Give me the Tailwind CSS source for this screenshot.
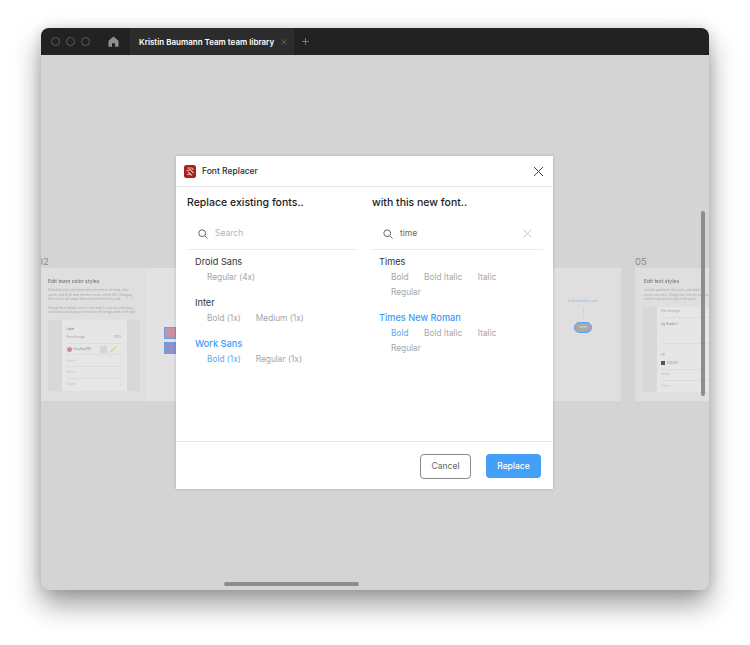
<!DOCTYPE html>
<html lang="en">
  <head>
    <meta charset="UTF-8" />
    <meta name="viewport" content="width=device-width, initial-scale=1.0" />
    <script src="https://cdn.jsdelivr.net/npm/@tailwindcss/browser@4"></script>
    <title>Font Replacer</title>
  </head>

  <body class="bg-white font-['Inter',sans-serif] w-[750px] h-[645px] overflow-hidden">
    <div class="pt-[28px] pl-[41px]">
      <!-- window -->
      <div class="relative w-[668px] h-[562px] rounded-[8px] overflow-hidden bg-[#d4d4d4] shadow-[0_14px_28px_rgba(0,0,0,0.4),0_0_12px_rgba(0,0,0,0.12)]">
        <!-- title bar -->
        <div class="flex items-center h-[27px] bg-[#222222]">
          <div class="flex items-center gap-[6px] pl-[10px] w-[89px] shrink-0">
            <span class="w-[9px] h-[9px] shrink-0 rounded-full border border-[#5c5c5c]"></span>
            <span class="w-[9px] h-[9px] shrink-0 rounded-full border border-[#5c5c5c]"></span>
            <span class="w-[9px] h-[9px] shrink-0 rounded-full border border-[#5c5c5c]"></span>
            <svg class="ml-[12px] shrink-0" width="11" height="11" viewBox="0 0 11 11"><path d="M5.5 0.5 L10.5 4.8 V10.8 H7 V7.2 H4 V10.8 H0.5 V4.8 Z" fill="#8f8f8f"/></svg>
          </div>
          <div class="flex items-center h-full w-[164px] bg-[#2c2c2c] pl-[9px] text-[8px] font-semibold text-white whitespace-nowrap">
            Kristin Baumann Team team library
            <svg class="ml-[7px] shrink-0" width="6" height="6" viewBox="0 0 6 6"><path d="M0.5 0.5 L5.5 5.5 M5.5 0.5 L0.5 5.5" stroke="#5e5e5e" stroke-width="1"/></svg>
          </div>
          <svg class="ml-[8px]" width="7" height="7" viewBox="0 0 7 7"><path d="M3.5 0 V7 M0 3.5 H7" stroke="#777777" stroke-width="1"/></svg>
        </div>

        <!-- canvas frames -->
        <span class="absolute -left-[4px] top-[227px] text-[9.5px] text-[#8a8a8a]">02</span>
        <div class="absolute left-0 top-[240px] w-[135px] h-[133px] bg-[#e2e2e2] flex blur-[0.4px]">
          <div class="w-[105px] h-full bg-[#dfdfdf] pl-[7px] pt-[10px]">
            <p class="text-[5px] leading-[6px] font-medium text-[#777777]">Edit team color styles</p>
            <p class="mt-[4px] text-[2.8px] leading-[4.5px] text-[#a8a8a8] whitespace-nowrap">Published styles are shared with everyone on the team—they<br />can be used by all team members in any of their files. Changing<br />these styles will update them everywhere they're used.</p>
            <p class="mt-[4px] text-[2.8px] leading-[4.5px] text-[#a8a8a8] whitespace-nowrap">Change these default colors to your team's colors by selecting a<br />color layer and clicking on the icon in the Design panel to the right.</p>
            <div class="mt-[5px] w-[92px] h-[71px] bg-[#d8d8d8] flex justify-center overflow-hidden">
              <div class="w-[65px] h-full bg-[#e6e6e6] px-[5px] text-[3px] text-[#a0a0a0] flex flex-col">
                <span class="h-[13px] pt-[7px] font-semibold text-[#888888]">Layer</span>
                <span class="h-[13px] flex items-center justify-between border-b border-[#dcdcdc]"><span>Pass through</span><span>100%</span></span>
                <span class="h-[13px] flex items-center gap-[2px] border-b border-[#dcdcdc] text-[#888888]"><i class="w-[5px] h-[5px] rounded-full bg-[#d488a8]"></i>Fuschia/700<i class="ml-[7px] w-[7px] h-[7px] bg-[#d4d4d4]"></i><i class="w-[8px] h-px bg-[#e0c878] -rotate-45"></i></span>
                <span class="h-[13px] flex items-center justify-between border-b border-[#dcdcdc] text-[#c0c0c0]"><span>Stroke</span><span>+</span></span>
                <span class="h-[13px] flex items-center justify-between border-b border-[#dcdcdc] text-[#c0c0c0]"><span>Effects</span><span>+</span></span>
                <span class="h-[13px] flex items-center justify-between text-[#c0c0c0]"><span>Export</span><span>+</span></span>
              </div>
            </div>
          </div>
          <div class="flex flex-col gap-[3px] pl-[18px] pt-[59px]">
            <span class="w-[12px] h-[12px] bg-[#c88fa8] border border-[#6d9fe0]"></span>
            <span class="w-[12px] h-[12px] bg-[#8e8fcc] border border-[#6d9fe0]"></span>
          </div>
        </div>
        <div class="absolute left-[512px] top-[240px] w-[68px] h-[133px] bg-[#dfdfdf] flex flex-col items-center pt-[31px] pr-[8px] blur-[0.4px]">
          <span class="text-[3px] leading-[4px] text-[#8db4e6] whitespace-nowrap">Color me with a style</span>
          <span class="w-px h-[11px] bg-[#c4d4ea] mt-[5px]"></span>
          <span class="flex items-center justify-center w-[18px] h-[11px] mt-[3px] shrink-0 rounded-full bg-[#a8a8a8] border-[1.5px] border-[#5f9cec] text-[2.5px] text-[#d8e4f4]">Button</span>
        </div>
        <span class="absolute left-[594px] top-[227px] text-[9.5px] text-[#8a8a8a]">05</span>
        <div class="absolute left-[594px] top-[240px] w-[74px] h-[133px] bg-[#dfdfdf] overflow-hidden pl-[9px] pt-[10px] blur-[0.4px]">
          <p class="text-[5px] leading-[6px] font-medium text-[#777777] whitespace-nowrap">Edit text styles</p>
          <p class="mt-[4px] text-[2.8px] leading-[4.5px] text-[#a8a8a8] whitespace-nowrap">Just like published color styles, published text<br />across your team. Change text styles by selecting<br />with the style and clicking on the panel</p>
          <div class="mt-[5px] flex h-[85px] w-[80px] -ml-[1px]">
            <div class="w-[14px] bg-[#d8d8d8]"></div>
            <div class="flex-1 bg-[#e6e6e6] pl-[4px] text-[3px] text-[#a0a0a0] flex flex-col whitespace-nowrap">
              <span class="h-[13px] flex items-center border-b border-[#dcdcdc]">Pass through</span>
              <span class="h-[30px] pt-[4px] border-b border-[#dcdcdc] text-[#888888]">Ag Header 1</span>
              <span class="h-[16px] pt-[9px]">Fill</span>
              <span class="h-[13px] flex items-center gap-[2px] border-b border-[#dcdcdc]"><i class="w-[4px] h-[4px] bg-[#555555]"></i>000000</span>
              <span class="h-[13px] flex items-center border-b border-[#dcdcdc] text-[#c0c0c0]">Stroke</span>
              <span class="h-[13px] flex items-center text-[#c0c0c0]">Effects</span>
            </div>
          </div>
        </div>

        <!-- scrollbars -->
        <div class="absolute left-[660px] top-[183px] w-[4px] h-[185px] rounded-full bg-[#8d8d8d]"></div>
        <div class="absolute left-[183px] top-[554px] w-[135px] h-[4px] rounded-full bg-[#8d8d8d]"></div>

        <!-- modal -->
        <div class="absolute left-[135px] top-[128px] w-[377px] h-[333px] bg-white flex flex-col shadow-[0_0_3px_rgba(0,0,0,0.2)]">
          <div class="flex items-center justify-between h-[31px] border-b border-[#e6e6e6] pl-[8px] pr-[9px]">
            <div class="flex items-center gap-[6px]">
              <svg width="12" height="13" viewBox="0 0 12 13">
                <rect width="12" height="13" rx="2.5" fill="#a8201c"/>
                <path d="M3 3 H8 L9.5 5 M2.5 6 L6 4.5 L9.5 8 M4 7 L8 10.5 M3 9.5 H6" stroke="#e8aaa6" stroke-width="1.2" fill="none"/>
              </svg>
              <span class="text-[8.5px] font-medium text-[#2b2b2b]">Font Replacer</span>
            </div>
            <svg width="11" height="11" viewBox="0 0 11 11"><path d="M1 1 L10 10 M10 1 L1 10" stroke="#444444" stroke-width="1"/></svg>
          </div>

          <div class="flex flex-1 pl-[11px]">
            <!-- left column -->
            <div class="w-[185px]">
              <h2 class="pt-[8px] text-[10.5px] leading-[15px] font-medium text-[#1d1d1d]">Replace existing fonts..</h2>
              <div class="flex items-center gap-[7px] h-[32px] mt-[8px] w-[171px] border-b border-[#ececec] pl-[11px]">
                <svg width="10" height="10" viewBox="0 0 10 10" fill="none" stroke="#666666"><circle cx="4.2" cy="4.2" r="3.4"/><path d="M6.8 6.8 L9.6 9.6"/></svg>
                <span class="text-[8.5px] text-[#b4b4b4]">Search</span>
              </div>
              <div class="pl-[8px] pt-[5px]">
                <p class="text-[9.2px] leading-[14px] text-[#333333]">Droid Sans</p>
                <div class="flex gap-[15px] pl-[12px] text-[8.3px] leading-[16px] text-[#a6a6a6]"><span>Regular (4x)</span></div>
                <p class="pt-[11px] text-[9.2px] leading-[14px] text-[#333333]">Inter</p>
                <div class="flex gap-[15px] pl-[12px] text-[8.3px] leading-[16px] text-[#a6a6a6]"><span>Bold (1x)</span><span>Medium (1x)</span></div>
                <p class="pt-[11px] text-[9.2px] leading-[14px] font-medium text-[#3f9bf5]">Work Sans</p>
                <div class="flex gap-[15px] pl-[12px] text-[8.3px] leading-[16px] text-[#a6a6a6]"><span class="text-[#5aa8f5]">Bold (1x)</span><span>Regular (1x)</span></div>
              </div>
            </div>
            <!-- right column -->
            <div class="w-[171px]">
              <h2 class="pt-[8px] text-[10.5px] leading-[15px] font-medium text-[#1d1d1d]">with this new font..</h2>
              <div class="flex items-center h-[32px] mt-[8px] border-b border-[#ececec] pl-[11px] pr-[11px]">
                <svg width="10" height="10" viewBox="0 0 10 10" fill="none" stroke="#666666"><circle cx="4.2" cy="4.2" r="3.4"/><path d="M6.8 6.8 L9.6 9.6"/></svg>
                <span class="ml-[7px] text-[8.5px] text-[#666666]">time</span>
                <svg class="ml-auto" width="9" height="9" viewBox="0 0 9 9"><path d="M0.5 0.5 L8.5 8.5 M8.5 0.5 L0.5 8.5" stroke="#c4c4c4" stroke-width="1"/></svg>
              </div>
              <div class="pl-[7px] pt-[5px]">
                <p class="text-[9.2px] leading-[14px] text-[#333333]">Times</p>
                <div class="flex flex-wrap gap-x-[15.5px] pl-[12px] pt-[1px] text-[8.3px] leading-[15px] text-[#a6a6a6] w-[130px]"><span>Bold</span><span>Bold Italic</span><span>Italic</span><span>Regular</span></div>
                <p class="pt-[11px] text-[9.2px] leading-[14px] font-medium text-[#3f9bf5]">Times New Roman</p>
                <div class="flex flex-wrap gap-x-[15.5px] pl-[12px] pt-[1px] text-[8.3px] leading-[15px] text-[#a6a6a6] w-[130px]"><span class="text-[#5aa8f5]">Bold</span><span>Bold Italic</span><span>Italic</span><span>Regular</span></div>
              </div>
            </div>
          </div>

          <div class="flex items-center justify-end gap-[15px] h-[48px] border-t border-[#e6e6e6] pt-[1px] pr-[12px]">
            <button class="w-[51px] h-[25px] rounded-[4px] border border-[#888888] bg-white text-[8.5px] text-[#666666]">Cancel</button>
            <button class="w-[55px] h-[24px] rounded-[4px] bg-[#439ff8] text-[8.5px] font-medium text-white">Replace</button>
          </div>
        </div>
      </div>
    </div>
  </body>
</html>
